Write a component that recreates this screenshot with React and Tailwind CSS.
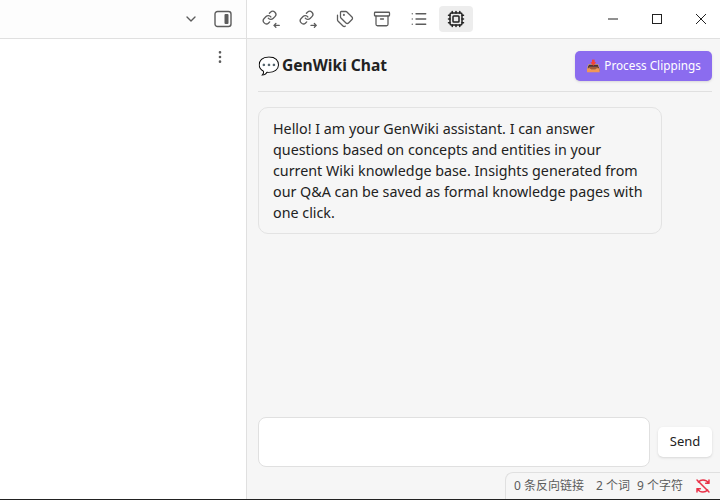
import React from "react";
import { Archive, ChevronDown, Cpu, EllipsisVertical, List, Tags } from "lucide-react";

function LinkIcon({ out }) {
  return (
    <svg width="18" height="18" viewBox="0 0 24 24" fill="none" stroke="currentColor" strokeWidth="1.7" strokeLinecap="round" strokeLinejoin="round">
      <g transform="scale(0.84)" strokeWidth="2.1">
        <path d="M10 13a5 5 0 0 0 7.54.54l3-3a5 5 0 0 0-7.07-7.07l-1.72 1.71" />
        <path d="M14 11a5 5 0 0 0-7.54-.54l-3 3a5 5 0 0 0 7.07 7.07l1.71-1.71" />
      </g>
      {out ? <path d="M16 20.5h7M20.5 18l2.5 2.5-2.5 2.5" /> : <path d="M23 20.5h-7M18.5 18L16 20.5l2.5 2.5" />}
    </svg>
  );
}

function ToolButton({ children, active }) {
  return (
    <div className={`flex h-[26px] w-[34px] items-center justify-center rounded text-[#5c5c5c] ${active ? "bg-[#ededed] text-[#222]" : ""}`}>
      {children}
    </div>
  );
}

function SyncOff() {
  return (
    <svg width="16" height="16" viewBox="0 0 24 24" fill="none" stroke="#e93147" strokeWidth="2.2" strokeLinecap="round" strokeLinejoin="round">
      <path d="M21 8h-5M21 8V3M21 8c-2-3-5-5-9-5-3 0-5 1-7 3" />
      <path d="M3 16h5M3 16v5M3 16c2 3 5 5 9 5 3 0 5-1 7-3" />
      <path d="M3 3l18 18" />
    </svg>
  );
}

export default function App() {
  return (
    <div className="relative flex h-[500px] w-[720px] overflow-hidden border-b border-[#222] bg-white text-[#222] font-['Noto_Sans','Noto_Sans_CJK_SC',sans-serif]">
      {/* left sidebar */}
      <div className="flex w-[247px] shrink-0 flex-col border-r border-[#e0e0e0]">
        <div className="flex h-[39px] shrink-0 items-center justify-end border-b border-[#e0e0e0] bg-[#fdfdfd] pr-[14px] text-[#5c5c5c]">
          <ChevronDown size={16} className="mr-[15px]" />
          <svg width="18" height="18" viewBox="0 0 18 18" fill="none">
            <rect x="1" y="1.5" width="16" height="15" rx="2.5" stroke="#5c5c5c" strokeWidth="1.4" />
            <rect x="10.5" y="4" width="4" height="10" rx="1" fill="#5c5c5c" />
          </svg>
        </div>
        <div className="flex justify-end pr-[18px] pt-[10px] text-[#5c5c5c]">
          <EllipsisVertical size={16} />
        </div>
      </div>

      {/* main panel */}
      <div className="flex min-w-0 flex-1 flex-col bg-[#f6f6f6]">
        <div className="flex h-[39px] shrink-0 items-center justify-between border-b border-[#e0e0e0] bg-white pl-[7px] pr-[14px]">
          <div className="flex items-center gap-[3px]">
            <ToolButton><LinkIcon /></ToolButton>
            <ToolButton><LinkIcon out /></ToolButton>
            <ToolButton><Tags size={18} strokeWidth={1.7} /></ToolButton>
            <ToolButton><Archive size={18} strokeWidth={1.7} /></ToolButton>
            <ToolButton><List size={18} strokeWidth={1.7} /></ToolButton>
            <ToolButton active><Cpu size={18} strokeWidth={2} /></ToolButton>
          </div>
          <div className="flex items-center gap-[34px] text-[#222]">
            <svg width="10" height="10" viewBox="0 0 10 10" stroke="currentColor" strokeWidth="1">
              <path d="M0 5h10" />
            </svg>
            <svg width="10" height="10" viewBox="0 0 10 10" fill="none" stroke="currentColor" strokeWidth="1">
              <rect x="0.5" y="0.5" width="9" height="9" />
            </svg>
            <svg width="10" height="10" viewBox="0 0 10 10" stroke="currentColor" strokeWidth="1">
              <path d="M0 0l10 10M10 0L0 10" />
            </svg>
          </div>
        </div>

        <div className="flex min-h-0 flex-1 flex-col pl-[11px] pr-2 pt-3">
          <div className="flex items-center justify-between border-b border-[#e0e0e0] pb-[10px]">
            <div className="mb-0.5 flex items-center gap-0.5 text-[15.6px] font-bold leading-[28px]">
              <span className="text-[17.5px] font-normal">💬</span>
              <span>GenWiki Chat</span>
            </div>
            <button className="h-[30px] w-[137px] whitespace-nowrap rounded-[5px] bg-[#8b6cef] text-[11.75px] text-white shadow-sm">📥 Process Clippings</button>
          </div>
          <div className="mt-[15px] w-[404px] rounded-[10px] border border-[#e3e3e3] bg-[#f6f6f6] px-[14px] py-[10px] text-[14.3px] leading-[21px]">
            Hello! I am your GenWiki assistant. I can answer questions based on concepts and entities in your current Wiki knowledge base. Insights generated from our Q&amp;A can be saved as formal knowledge pages with one click.
          </div>
          <div className="mt-auto mb-[32px] flex items-center gap-2">
            <div className="h-[50px] flex-1 rounded-lg border border-[#e0e0e0] bg-white" />
            <button className="h-[30px] w-[54px] rounded-[5px] bg-white text-[13px] shadow-sm">Send</button>
          </div>
        </div>
      </div>

      {/* status bar sits over the panel corner */}
      <div className="absolute bottom-0 right-0 flex h-[27px] w-[215px] items-center rounded-tl-lg border-l border-t border-[#e0e0e0] bg-[#f6f6f6] pl-2 text-xs text-[#5c5c5c]">
        <span>0 条反向链接</span>
        <span className="ml-3">2 个词</span>
        <span className="ml-[7px]">9 个字符</span>
        <span className="ml-3"><SyncOff /></span>
      </div>
    </div>
  );
}
